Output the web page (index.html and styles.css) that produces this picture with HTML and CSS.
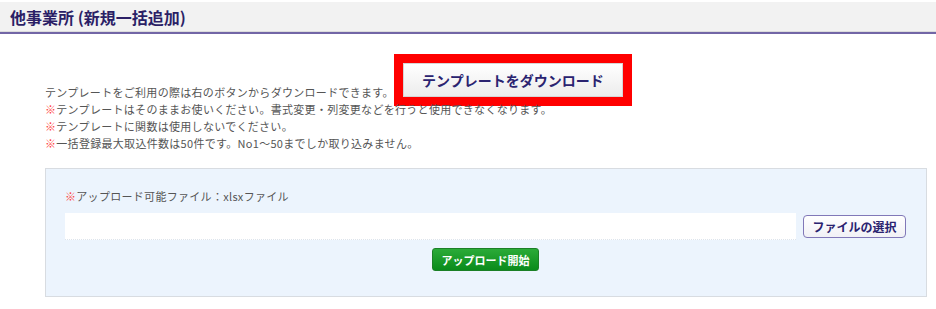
FILE: index.html
```html
<!DOCTYPE html>
<html lang="ja">
<head>
    <meta charset="UTF-8">
    <meta name="viewport" content="width=device-width, initial-scale=1.0">
    <title>他事業所 (新規一括追加)</title>
    <link rel="stylesheet" href="styles.css">
</head>
<body>
    <div class="page-head">
        <h1>他事業所 (新規一括追加)</h1>
    </div>
    <div class="content">
        <div class="intro">
            <p>テンプレートをご利用の際は右のボタンからダウンロードできます。</p>
            <button type="button" class="btn-template">テンプレートをダウンロード</button>
        </div>
        <p class="note"><span class="mark">※</span>テンプレートはそのままお使いください。書式変更・列変更などを行うと使用できなくなります。</p>
        <p class="note"><span class="mark">※</span>テンプレートに関数は使用しないでください。</p>
        <p class="note"><span class="mark">※</span>一括登録最大取込件数は50件です。No1〜50までしか取り込みません。</p>

        <div class="upload-box">
            <p class="label"><span class="mark">※</span>アップロード可能ファイル：xlsxファイル</p>
            <div class="file-row">
                <input type="text" class="file-name" readonly>
                <button type="button" class="btn-file">ファイルの選択</button>
            </div>
            <div class="actions">
                <button type="button" class="btn-upload">アップロード開始</button>
            </div>
        </div>
    </div>
</body>
</html>
```

FILE: styles.css
```css
body {
    margin: 0;
    background: #fff;
    font-family: "Noto Sans CJK JP", "Liberation Sans", sans-serif;
    color: #555;
}
.page-head {
    margin-top: 2px;
    height: 30px;
    background: #f2f2f2;
    border-bottom: 2px solid #7266a6;
    box-shadow: inset 0 -1px 0 #dcdcdc;
    display: flex;
    align-items: center;
    padding-left: 10px;
}
.page-head h1 {
    margin: 0;
    font-size: 16px;
    font-weight: bold;
    color: #2b1f66;
    line-height: 20px;
}
.content {
    padding: 0 9px 0 45px;
}
.intro {
    display: flex;
    align-items: flex-end;
    margin-top: 29px;
}
.intro p,
.note,
.label {
    margin: 0;
    font-size: 11px;
    line-height: 17px;
    letter-spacing: 0.3px;
    white-space: nowrap;
}
.mark { color: #f44; }
.btn-template {
    margin: 0 0 4px 9px;
    width: 220px;
    height: 34px;
    font-family: inherit;
    font-size: 14px;
    font-weight: bold;
    color: #2a2370;
    background: linear-gradient(#ffffff, #ececec);
    border: 1px solid #d6d6d6;
    outline: 9px solid #ff0000;
    cursor: pointer;
}
.upload-box {
    margin-top: 16px;
    background: #ecf4fd;
    border: 1px solid #d8dce1;
    padding: 19px 20px 25px 19px;
}
.file-row {
    display: flex;
    align-items: center;
    gap: 7px;
    margin-top: 8px;
}
.file-name {
    flex: 1;
    height: 27px;
    box-sizing: border-box;
    border: none;
    border-bottom: 1px dotted #dde4ec;
    background: #fff;
    outline: none;
}
.btn-file {
    width: 103px;
    height: 23px;
    padding: 0;
    font-family: inherit;
    font-size: 12px;
    font-weight: bold;
    color: #2a2370;
    background: linear-gradient(#ffffff, #f1f1f6);
    border: 1px solid #8178b8;
    border-radius: 4px;
    cursor: pointer;
}
.actions {
    display: flex;
    justify-content: center;
    margin-top: 8px;
}
.btn-upload {
    width: 107px;
    height: 23px;
    padding: 0;
    font-family: inherit;
    font-size: 11px;
    font-weight: bold;
    color: #fff;
    background: linear-gradient(#2bab38, #0a8b1b);
    border: 1px solid #1b8026;
    border-radius: 3px;
    cursor: pointer;
}
```
